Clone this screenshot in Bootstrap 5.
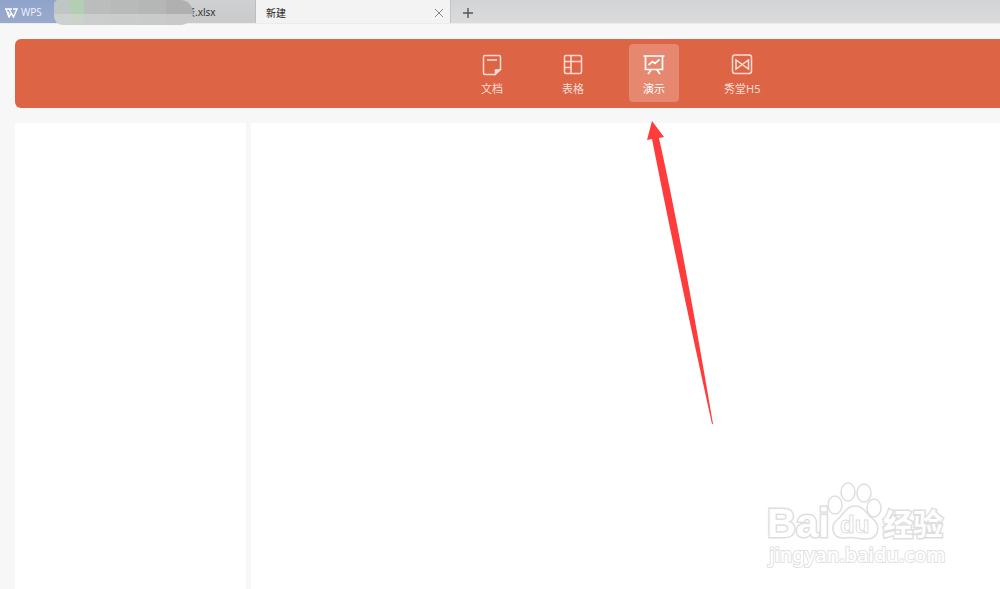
<!DOCTYPE html>
<html lang="zh-CN">
<head>
<meta charset="utf-8">
<meta name="viewport" content="width=device-width, initial-scale=1">
<title>新建</title>
<link href="https://cdn.jsdelivr.net/npm/bootstrap@5.3.0/dist/css/bootstrap.min.css" rel="stylesheet">
<style>
  body { background: #f7f7f7; font-family: "Noto Sans", "Noto Sans CJK SC", sans-serif; font-size: 10px; color: #333; }
  button { border: 0; background: none; padding: 0; color: inherit; }
  .tabstrip { height: 24px; background: linear-gradient(#d3d4d6, #dadbdc); border-bottom: 1px solid #ececec; }
  .tabstrip > * { padding-top: 2px; }
  .wps-home { width: 57px; padding-left: 5px; gap: 3px; background: linear-gradient(#8ea3cb, #9aa9cb); color: #fff; }
  .wps-home span { color: #e9eef8; }
  .file-tab { width: 199px; padding-left: 128px; background: linear-gradient(#cfd0d2, #c9cacc); border-right: 1px solid #bdbec0; }
  .redaction { left: -3px; top: 0; width: 139px; height: 25px; border-radius: 5px 14px 14px 10px;
    background: linear-gradient(transparent 14px, #d4d5d5aa 14px), linear-gradient(90deg, #bfc7c6 0 16px, #b3cfb3 16px 30px, #bbbcbc 30px 57px, #b8b9b9 57px 85px, #b5b6b6 85px 112px, #b0b0b1 112px); }
  .new-tab { width: 194px; padding: 3px 6px 0 10px; background: #f3f3f3; color: #222; }
  .add-tab { width: 35px; border-left: 1px solid #c3c4c6; }
  .typebar { margin: 15px 0 0 15px; padding: 5px 0 6px 452px; gap: 31px; background: #dd6445; border-radius: 6px 0 0 6px; }
  .kind { height: 58px; padding: 10px 14px 0; border-radius: 4px; color: #f9ddd5; font-size: 11px; line-height: 16px; white-space: nowrap; gap: 5px; }
  .kind.active { background: #e5886f; color: #fff; }
  .pointer { left: 17px; top: 77px; pointer-events: none; z-index: 2; }
  .workspace { margin: 15px 0 0 15px; gap: 5px; }
  .sidebar { width: 231px; }
  .watermark { right: 51px; bottom: 15px; }
  .watermark text { font-family: "Noto Sans", "Noto Sans CJK SC", sans-serif; }
  .watermark .brand { font-family: "Liberation Sans", sans-serif; }
</style>
</head>
<body>
<div class="d-flex flex-column min-vh-100 overflow-hidden">
  <header class="tabstrip d-flex flex-shrink-0">
    <button class="wps-home d-flex align-items-center" type="button">
      <svg width="13" height="10" viewBox="0 0 13 10" fill="none" stroke="currentColor" stroke-width="1.4" aria-hidden="true"><path d="M0 1H7M1 1L4 9 6.500 5M4 1L8.500 9 12 1H8M3 4L4 6"/></svg>
      <span>WPS</span>
    </button>
    <div class="file-tab d-flex align-items-center position-relative">
      <span>表.xlsx</span>
      <div class="redaction position-absolute"></div>
    </div>
    <div class="new-tab d-flex align-items-center justify-content-between">
      <span>新建</span>
      <button class="d-flex" type="button" aria-label="关闭"><svg width="10" height="10" viewBox="0 0 10 10" stroke="#888"><path d="M1 1l8 8M9 1L1 9"/></svg></button>
    </div>
    <button class="add-tab d-flex align-items-center justify-content-center" type="button" aria-label="新建标签"><svg width="10" height="10" viewBox="0 0 10 10" stroke="#555" stroke-width="1.4"><path d="M5 0v10M0 5h10"/></svg></button>
  </header>

  <nav class="typebar d-flex flex-shrink-0">
    <button class="kind d-flex flex-column align-items-center" type="button">
      <svg width="22" height="22" viewBox="0 0 22 22" fill="none" stroke="currentColor" stroke-width="1.5" aria-hidden="true"><path d="M14 20.500H4Q2.500 20.500 2.500 19V3Q2.500 1.500 4 1.500H18Q19.500 1.500 19.500 3V15ZM6 6H16"/><path d="M14.500 20V16H19Z" fill="currentColor"/></svg>
      <span>文档</span>
    </button>
    <button class="kind d-flex flex-column align-items-center" type="button">
      <svg width="22" height="22" viewBox="0 0 22 22" fill="none" stroke="currentColor" stroke-width="1.5" aria-hidden="true"><rect x="2.500" y="1.500" width="17" height="18" rx="1.500"/><path d="M9 1.500v18M2.500 7.500h17M2.500 13.500H9"/></svg>
      <span>表格</span>
    </button>
    <button class="kind active d-flex flex-column align-items-center position-relative" type="button">
      <svg width="22" height="22" viewBox="0 0 22 22" fill="none" stroke="currentColor" stroke-width="1.7" aria-hidden="true"><path d="M.500 2h21M2.500 2v13.500h17V2M8 16l-3 4M14 16l3 4M5.500 11l4-3.500 2.500 2 4.500-4"/></svg>
      <span>演示</span>
      <svg class="pointer position-absolute" width="70" height="306" viewBox="0 0 70 306" fill="#ff3b3b" aria-hidden="true"><path d="M6 0L18 16 13 17Q36 120 67 303L66 303Q30 140 6 18L1 19Z"/></svg>
    </button>
    <button class="kind d-flex flex-column align-items-center" type="button">
      <svg width="22" height="22" viewBox="0 0 22 22" fill="none" stroke="currentColor" stroke-width="1.5" aria-hidden="true"><rect x="1.500" y="1" width="19" height="18.500" rx="2.500"/><path d="M5 6v9L17.500 6v9Z"/></svg>
      <span>秀堂H5</span>
    </button>
  </nav>

  <main class="workspace d-flex flex-grow-1 position-relative">
    <aside class="sidebar bg-white flex-shrink-0"></aside>
    <section class="bg-white flex-grow-1"></section>
    <svg class="watermark position-absolute" width="184" height="94" viewBox="0 0 184 94" fill="#fff" stroke="#dedede" stroke-width="1.500" aria-label="Baidu 经验">
      <g font-weight="700" stroke-width="3" paint-order="stroke">
        <text class="brand" x="2" y="57" font-size="40">Bai</text>
        <text x="118" y="55" font-size="30">经验</text>
      </g>
      <ellipse cx="70" cy="25" rx="7" ry="9"/><ellipse cx="83" cy="12" rx="7" ry="9"/><ellipse cx="99" cy="13" rx="7" ry="9"/><ellipse cx="109" cy="28" rx="7" ry="9"/>
      <path d="M90 26C81 26 79 34 72 40C65 46 67 58 78 58C83 58 86 57 91 58C96 59 102 60 107 58C115 54 114 44 108 39C101 34 99 26 90 26Z"/>
      <text class="brand" x="75" y="53" font-size="24" font-weight="700" stroke-width="1">du</text>
      <text x="4" y="82" font-size="20" font-weight="500" stroke="#e2e2e2" stroke-width="2" paint-order="stroke">jingyan.baidu.com</text>
    </svg>
  </main>
</div>
<script src="https://cdn.jsdelivr.net/npm/bootstrap@5.3.0/dist/js/bootstrap.bundle.min.js"></script>
</body>
</html>
